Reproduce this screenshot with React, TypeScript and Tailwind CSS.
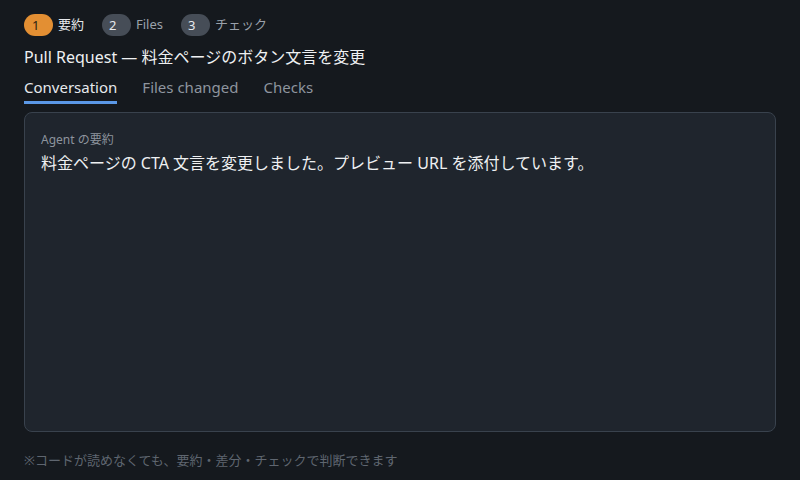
import React from "react";

const steps = [
  { n: "1", label: "要約", active: true },
  { n: "2", label: "Files", active: false },
  { n: "3", label: "チェック", active: false },
];

const tabs = ["Conversation", "Files changed", "Checks"];

export default function App() {
  return (
    <main
      className="w-[800px] h-[480px] bg-[#15191e] text-[#e6e9ed] flex flex-col px-6 pt-[14px] overflow-hidden"
      style={{ fontFamily: '"Noto Sans", "Noto Sans CJK JP", sans-serif' }}
    >
      {/* Steps */}
      <div className="flex items-center gap-[18px] h-[22px]">
        {steps.map((s) => (
          <div key={s.n} className="flex items-center gap-[5px]">
            <span
              className={
                s.active
                  ? "w-[29px] h-[22px] rounded-full bg-[#e38f33] text-[#2a1e10] text-[13px] leading-[22px] pl-[8px]"
                  : "w-[29px] h-[22px] rounded-full bg-[#464d57] text-[#e6e9ed] text-[13px] leading-[22px] pl-[7px]"
              }
            >
              {s.n}
            </span>
            <span className={s.active ? "text-[13px] text-[#e6e9ed]" : "text-[13px] text-[#9aa1ab]"}>
              {s.label}
            </span>
          </div>
        ))}
      </div>

      {/* Title */}
      <h1 className="mt-[10px] text-[16px] leading-[22px] text-[#eef0f2]">
        Pull Request — 料金ページのボタン文言を変更
      </h1>

      {/* Tabs */}
      <div className="flex gap-[25px] mt-[8px]">
        {tabs.map((t, i) => (
          <div
            key={t}
            className={
              i === 0
                ? "text-[15px] leading-[22px] pb-[3px] text-[#e6e9ed] border-b-[3px] border-[#5b98e6]"
                : "text-[15px] leading-[22px] pb-[3px] text-[#8e959f] border-b-[3px] border-transparent"
            }
          >
            {t}
          </div>
        ))}
      </div>

      {/* Card */}
      <section className="mt-[8px] h-[320px] rounded-lg border border-[#39424d] bg-[#1f252d] px-4 pt-[18px]">
        <p className="text-[12px] leading-[18px] text-[#8d949d]">Agent の要約</p>
        <p className="mt-[2px] text-[16px] leading-[24px] text-[#eef0f2]">
          料金ページの CTA 文言を変更しました。プレビュー URL を添付しています。
        </p>
      </section>

      {/* Footer note */}
      <p className="mt-[19px] text-[13px] leading-[18px] text-[#5f6670]">
        ※コードが読めなくても、要約・差分・チェックで判断できます
      </p>
    </main>
  );
}
